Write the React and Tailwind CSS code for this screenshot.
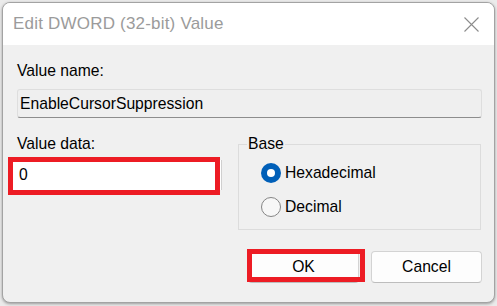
export default function App() {
  const font = { fontFamily: '"Liberation Sans", Arial, sans-serif' };
  return (
    <div className="w-[497px] h-[306px] bg-[#ebebeb] pl-[2px] pt-[2px] overflow-hidden" style={font}>
      <div className="w-[493px] h-[301px] border border-[#a3a3a3] rounded-[8px] overflow-hidden flex flex-col bg-[#f0f0f0] shadow-[0_1px_3px_rgba(0,0,0,0.35)]">
        {/* Title bar */}
        <div className="h-[42px] shrink-0 bg-white flex items-center justify-between pl-[10px] pr-[15px]">
          <span className="text-[17px] leading-[20px] tracking-[0.2px] text-[#9b9b9b]">Edit DWORD (32-bit) Value</span>
          <svg width="15" height="15" viewBox="0 0 15 15" className="block">
            <path d="M0.5 0.5 L14.5 14.5 M14.5 0.5 L0.5 14.5" stroke="#8c8c8c" strokeWidth="1.1" fill="none" />
          </svg>
        </div>
        {/* Body */}
        <div className="flex-1 flex flex-col pl-[14px] pr-[12px] text-[15.7px] leading-[18px] text-black">
          <div className="mt-[17px]">Value name:</div>
          <div className="mt-[9px] h-[29px] border border-[#dedede] border-b-[#8d8d8d] rounded-[3px] bg-[#efefef] flex items-center pl-[2px]">
            EnableCursorSuppression
          </div>
          <div className="mt-[17px] flex items-start">
            <div className="w-[205px] flex flex-col">
              <div>Value data:</div>
              <div className="relative mt-[7px] ml-[-4px] w-[209px] h-[30px] bg-white border-r border-[#cfcfcf] flex items-center pl-[6px]">
                0
                <div className="absolute left-[-5px] top-[-3px] w-[212px] h-[38px] border-[5px] border-[#ed1c24]" />
              </div>
            </div>
            <fieldset className="ml-[16px] w-[243px] h-[95px] border border-[#dcdcdc] m-0 p-0 min-w-0">
              <legend className="ml-[8px] px-[1px]">Base</legend>
              <div className="flex flex-col pl-[22px] pt-[10px] gap-[14px]">
                <div className="flex items-center h-[20px]">
                  <div className="w-[20px] h-[20px] rounded-full bg-[#005fb8] flex items-center justify-center">
                    <div className="w-[8px] h-[8px] rounded-full bg-white" />
                  </div>
                  <span className="ml-[4px]">Hexadecimal</span>
                </div>
                <div className="flex items-center h-[20px]">
                  <div className="w-[20px] h-[20px] rounded-full border border-[#858585] bg-[#f7f7f7]" />
                  <span className="ml-[4px]">Decimal</span>
                </div>
              </div>
            </fieldset>
          </div>
          <div className="mt-[21px] flex justify-end gap-[12px]">
            <div className="relative w-[111px] h-[32px] bg-[#fdfdfd] border border-[#d3d3d3] border-b-[#bdbdbd] rounded-[4px] flex items-center justify-center">
              OK
              <div className="absolute left-[-2px] top-[-3px] w-[118px] h-[33px] border-[5px] border-[#ed1c24]" />
            </div>
            <div className="w-[111px] h-[32px] bg-[#fdfdfd] border border-[#d3d3d3] border-b-[#bdbdbd] rounded-[4px] flex items-center justify-center">
              Cancel
            </div>
          </div>
        </div>
      </div>
    </div>
  );
}
